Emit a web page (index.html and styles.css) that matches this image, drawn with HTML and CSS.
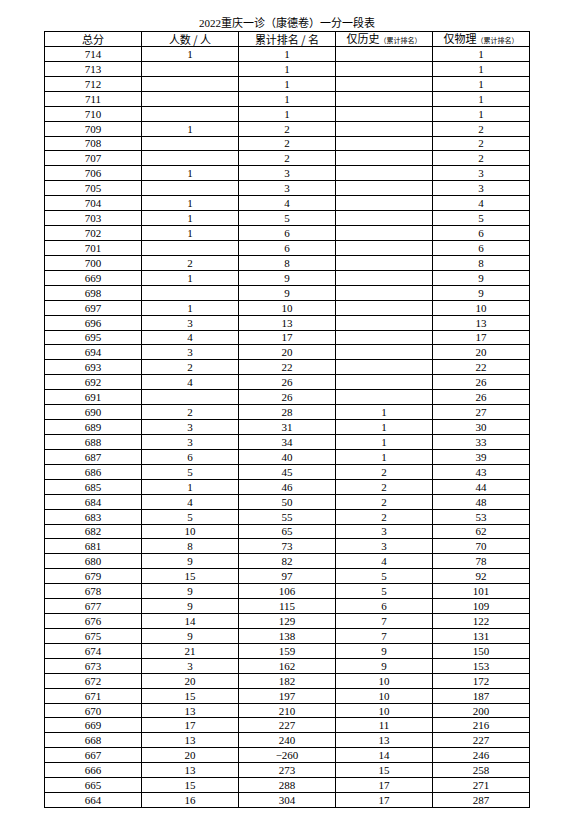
FILE: index.html
```html
<!DOCTYPE html>
<html lang="zh-CN">
<head>
<meta charset="utf-8">
<title>2022重庆一诊（康德卷）一分一段表</title>
<link rel="stylesheet" href="styles.css">
</head>
<body>
<div class="page">
  <h1 class="title">2022重庆一诊（康德卷）一分一段表</h1>
  <table class="score-table">
    <colgroup><col class="c"><col class="c"><col class="c"><col class="c"><col class="c"></colgroup>
    <thead>
      <tr><th>总分</th><th>人数 / 人</th><th>累计排名 / 名</th><th>仅历史<span class="sub">（累计排名）</span></th><th>仅物理<span class="sub">（累计排名）</span></th></tr>
    </thead>
    <tbody>
      <tr><td>714</td><td>1</td><td>1</td><td></td><td>1</td></tr>
      <tr><td>713</td><td></td><td>1</td><td></td><td>1</td></tr>
      <tr><td>712</td><td></td><td>1</td><td></td><td>1</td></tr>
      <tr><td>711</td><td></td><td>1</td><td></td><td>1</td></tr>
      <tr><td>710</td><td></td><td>1</td><td></td><td>1</td></tr>
      <tr><td>709</td><td>1</td><td>2</td><td></td><td>2</td></tr>
      <tr><td>708</td><td></td><td>2</td><td></td><td>2</td></tr>
      <tr><td>707</td><td></td><td>2</td><td></td><td>2</td></tr>
      <tr><td>706</td><td>1</td><td>3</td><td></td><td>3</td></tr>
      <tr><td>705</td><td></td><td>3</td><td></td><td>3</td></tr>
      <tr><td>704</td><td>1</td><td>4</td><td></td><td>4</td></tr>
      <tr><td>703</td><td>1</td><td>5</td><td></td><td>5</td></tr>
      <tr><td>702</td><td>1</td><td>6</td><td></td><td>6</td></tr>
      <tr><td>701</td><td></td><td>6</td><td></td><td>6</td></tr>
      <tr><td>700</td><td>2</td><td>8</td><td></td><td>8</td></tr>
      <tr><td>669</td><td>1</td><td>9</td><td></td><td>9</td></tr>
      <tr><td>698</td><td></td><td>9</td><td></td><td>9</td></tr>
      <tr><td>697</td><td>1</td><td>10</td><td></td><td>10</td></tr>
      <tr><td>696</td><td>3</td><td>13</td><td></td><td>13</td></tr>
      <tr><td>695</td><td>4</td><td>17</td><td></td><td>17</td></tr>
      <tr><td>694</td><td>3</td><td>20</td><td></td><td>20</td></tr>
      <tr><td>693</td><td>2</td><td>22</td><td></td><td>22</td></tr>
      <tr><td>692</td><td>4</td><td>26</td><td></td><td>26</td></tr>
      <tr><td>691</td><td></td><td>26</td><td></td><td>26</td></tr>
      <tr><td>690</td><td>2</td><td>28</td><td>1</td><td>27</td></tr>
      <tr><td>689</td><td>3</td><td>31</td><td>1</td><td>30</td></tr>
      <tr><td>688</td><td>3</td><td>34</td><td>1</td><td>33</td></tr>
      <tr><td>687</td><td>6</td><td>40</td><td>1</td><td>39</td></tr>
      <tr><td>686</td><td>5</td><td>45</td><td>2</td><td>43</td></tr>
      <tr><td>685</td><td>1</td><td>46</td><td>2</td><td>44</td></tr>
      <tr><td>684</td><td>4</td><td>50</td><td>2</td><td>48</td></tr>
      <tr><td>683</td><td>5</td><td>55</td><td>2</td><td>53</td></tr>
      <tr><td>682</td><td>10</td><td>65</td><td>3</td><td>62</td></tr>
      <tr><td>681</td><td>8</td><td>73</td><td>3</td><td>70</td></tr>
      <tr><td>680</td><td>9</td><td>82</td><td>4</td><td>78</td></tr>
      <tr><td>679</td><td>15</td><td>97</td><td>5</td><td>92</td></tr>
      <tr><td>678</td><td>9</td><td>106</td><td>5</td><td>101</td></tr>
      <tr><td>677</td><td>9</td><td>115</td><td>6</td><td>109</td></tr>
      <tr><td>676</td><td>14</td><td>129</td><td>7</td><td>122</td></tr>
      <tr><td>675</td><td>9</td><td>138</td><td>7</td><td>131</td></tr>
      <tr><td>674</td><td>21</td><td>159</td><td>9</td><td>150</td></tr>
      <tr><td>673</td><td>3</td><td>162</td><td>9</td><td>153</td></tr>
      <tr><td>672</td><td>20</td><td>182</td><td>10</td><td>172</td></tr>
      <tr><td>671</td><td>15</td><td>197</td><td>10</td><td>187</td></tr>
      <tr><td>670</td><td>13</td><td>210</td><td>10</td><td>200</td></tr>
      <tr><td>669</td><td>17</td><td>227</td><td>11</td><td>216</td></tr>
      <tr><td>668</td><td>13</td><td>240</td><td>13</td><td>227</td></tr>
      <tr><td>667</td><td>20</td><td>&minus;260</td><td>14</td><td>246</td></tr>
      <tr><td>666</td><td>13</td><td>273</td><td>15</td><td>258</td></tr>
      <tr><td>665</td><td>15</td><td>288</td><td>17</td><td>271</td></tr>
      <tr><td>664</td><td>16</td><td>304</td><td>17</td><td>287</td></tr>
    </tbody>
  </table>
</div>
</body>
</html>
```

FILE: styles.css
```css
html, body {
  margin: 0;
  padding: 0;
  background: #ffffff;
}

body {
  font-family: "Liberation Serif", "Noto Sans CJK SC", serif;
  color: #000000;
}

.page {
  width: 486px;
  padding: 17px 0 0 44px;
}

.title {
  margin: 0;
  height: 13px;
  font-size: 11px;
  line-height: 13px;
  font-weight: normal;
  text-align: center;
}

.score-table {
  margin-top: 1px;
  width: 486px;
  table-layout: fixed;
  border-collapse: collapse;
  font-size: 11px;
}

.score-table .c {
  width: 97px;
}

.score-table th,
.score-table td {
  border: 1px solid #000000;
  padding: 0;
  height: 13.93px;
  line-height: 12px;
  text-align: center;
  vertical-align: middle;
  font-weight: normal;
  white-space: nowrap;
  overflow: hidden;
}

.score-table th {
  font-family: "Noto Sans CJK SC", sans-serif;
  font-size: 11px;
}

.sub {
  font-size: 7px;
}
```
